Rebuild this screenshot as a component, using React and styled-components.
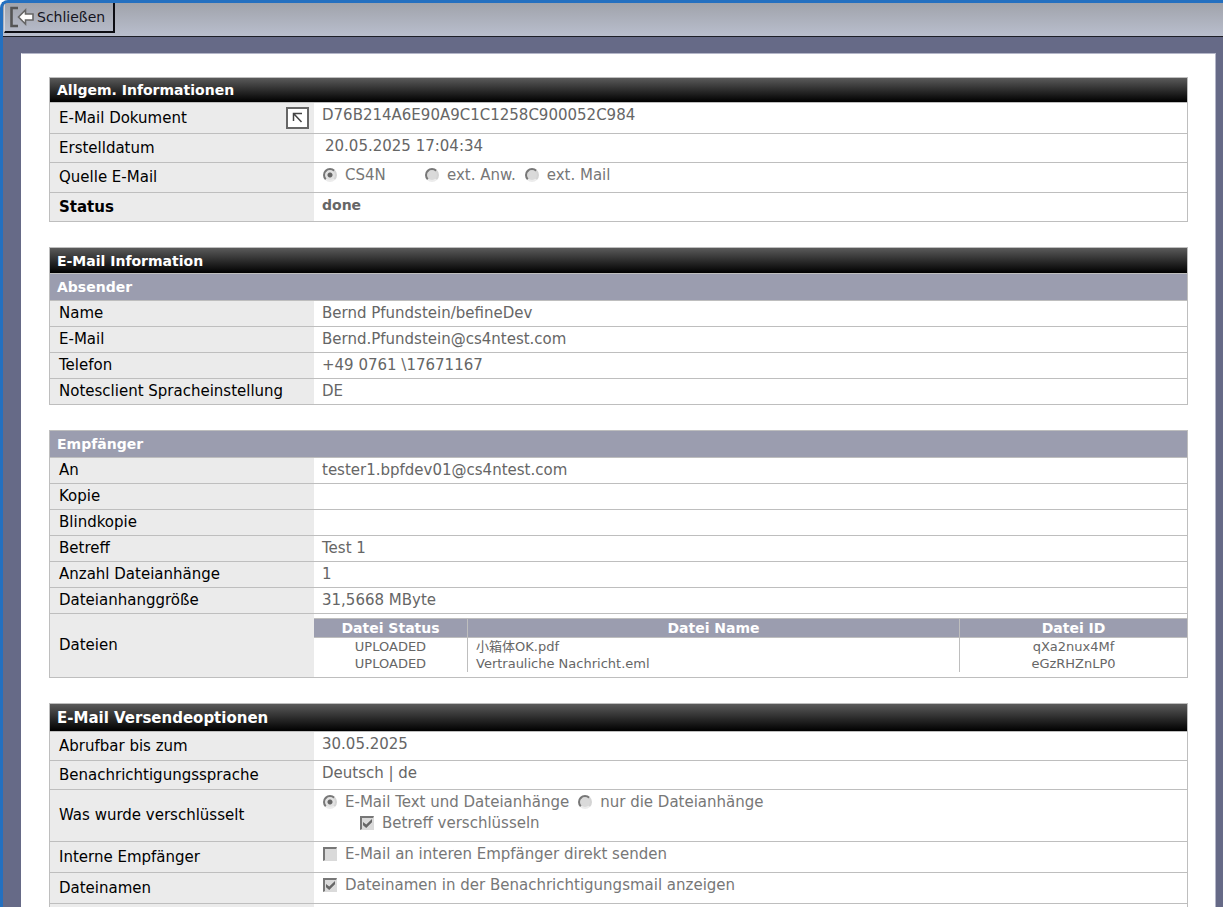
import React from "react";
import styled, { createGlobalStyle } from "styled-components";

const GlobalStyle = createGlobalStyle`
  * {
    box-sizing: border-box;
  }
  body {
    margin: 0;
    background: #fff;
    font-family: "DejaVu Sans", Verdana, "Noto Sans CJK SC", sans-serif;
    font-size: 15px;
    line-height: 20px;
    color: #000;
  }
`;

const Window = styled.div`
  display: flex;
  flex-direction: column;
  height: 100vh;
  border-top: 3px solid #2470c0;
  border-left: 3px solid #2470c0;
  border-top-left-radius: 8px;
  background: #666a87;
  overflow: hidden;
`;

const Toolbar = styled.header`
  display: flex;
  flex: none;
  height: 34px;
  padding: 0 1px 3px;
  border-bottom: 1px solid #1c1e26;
  background: linear-gradient(#a0a3ab, #b9becd);
`;

const ToolButton = styled.button`
  display: flex;
  align-items: center;
  gap: 3px;
  padding: 0 8px 1px 4px;
  border: solid;
  border-width: 0 2px 2px 1px;
  border-color: #0c0c12 #0c0c12 #0c0c12 #d5d8e2;
  background: transparent;
  font: inherit;
  font-size: 14px;
  color: #14141e;
`;

const Scroller = styled.main`
  flex: 1;
  min-height: 0;
  padding: 16px 7px 0 18px;
  overflow-y: auto;
  scrollbar-width: none;
`;

const Sheet = styled.div`
  display: flex;
  flex-direction: column;
  gap: 25px;
  padding: 23px 27px;
  border: 1px solid #b4b6c8;
  border-left-color: #fff;
  background: #fff;
`;

const Section = styled.table`
  width: 100%;
  table-layout: fixed;
  border-collapse: separate;
  border-spacing: 0;
  border: 1px solid #bebebe;
  border-bottom: 0;
`;

const LabelCol = styled.col`
  width: 264px;
`;

const Title = styled.th`
  height: ${(props) => props.$height || 26}px;
  padding: 0 7px;
  border-bottom: 1px solid #bebebe;
  background: linear-gradient(#5a5a5a, #000);
  font-size: ${(props) => (props.$large ? 15 : 14)}px;
  text-align: left;
  color: #fff;
`;

const SubTitle = styled(Title)`
  height: 27px;
  background: #9b9daf;
`;

const Label = styled.th`
  height: ${(props) => props.$height || 26}px;
  padding: 0 5px 1px 9px;
  border-bottom: 1px solid #bebebe;
  background: #ebebeb;
  font-weight: ${(props) => (props.$strong ? "bold" : "normal")};
  text-align: left;
`;

const LabelLine = styled.div`
  display: flex;
  align-items: center;
  justify-content: space-between;
`;

const Value = styled.td`
  padding: ${(props) => (props.$flush ? "4px 0 5px" : "2px 8px 0")};
  border-bottom: 1px solid #bebebe;
  font-size: ${(props) => (props.$strong ? 14 : 15)}px;
  font-weight: ${(props) => (props.$strong ? "bold" : "normal")};
  vertical-align: top;
  color: #666;
`;

const DateTime = styled.time`
  padding-left: 3px;
`;

const LinkButton = styled.button`
  display: grid;
  place-items: center;
  width: 23px;
  height: 22px;
  padding: 0;
  border: 2px solid #666;
  background: #fff;
`;

const Options = styled.div`
  display: flex;
  gap: 8px;
  padding-left: ${(props) => props.$indent || 0}px;
  & + & {
    margin-top: 1px;
  }
`;

const Option = styled.label`
  display: flex;
  align-items: center;
  gap: 8px;
  min-width: ${(props) => props.$width || 0}px;
  padding-left: 1px;
  color: #777;
`;

const Radio = styled.input`
  appearance: none;
  width: 14px;
  height: 14px;
  margin: 0;
  border: 2px solid;
  border-color: #777 #d4d4d4 #ececec #777;
  border-radius: 50%;
  background: #dadada;
  &:checked {
    background: radial-gradient(#666 2px, #e2e2e2 3px);
  }
`;

const Check = styled.input`
  appearance: none;
  display: grid;
  place-items: center;
  width: 14px;
  height: 14px;
  margin: 0;
  border: solid;
  border-width: 2px 1px 1px 2px;
  border-color: #777 #dadada #dadada #777;
  background: #dadada;
  &:checked::before {
    content: "";
    width: 9px;
    height: 9px;
    background: #666;
    clip-path: polygon(0 32%, 36% 62%, 100% 0, 100% 36%, 36% 100%, 0 70%);
  }
`;

const Files = styled.table`
  width: 100%;
  table-layout: fixed;
  border-collapse: separate;
  border-spacing: 0;
  font-size: 13px;
  line-height: 17px;
`;

const FileCol = styled.col`
  width: ${(props) => props.$width};
`;

const FileHead = styled.th`
  height: 20px;
  padding: 0;
  border: solid #bebebe;
  border-width: 1px 1px 1px 0;
  background: #9b9daf;
  font-size: 14px;
  color: #fff;
  &:last-child {
    border-right: 0;
  }
`;

const FileCell = styled.td`
  padding: 0 8px;
  border-right: 1px solid #bebebe;
  text-align: ${(props) => props.$align || "center"};
  &:last-child {
    border-right: 0;
  }
`;

const CloseIcon = () => (
  <svg width="25" height="22" viewBox="0 0 25 22" aria-hidden="true">
    <path d="M9 2H2.500v18H9" fill="none" stroke="#555" strokeWidth="2.600" />
    <path
      d="M9.500 11 16.500 4v4h7.500v6h-7.500v4z"
      fill="#fff"
      stroke="#666"
      strokeWidth="1.600"
    />
  </svg>
);

const OpenIcon = () => (
  <svg width="13" height="13" viewBox="0 0 13 13" aria-hidden="true">
    <path
      d="M2.500 10V2.500H11M3 3l7.500 8"
      fill="none"
      stroke="#444"
      strokeWidth="1.500"
    />
  </svg>
);

const Row = ({ label, height, strong, action, flush, children }) => (
  <tr>
    <Label scope="row" $height={height} $strong={strong}>
      {action ? (
        <LabelLine>
          {label}
          {action}
        </LabelLine>
      ) : (
        label
      )}
    </Label>
    <Value $strong={strong} $flush={flush}>
      {children}
    </Value>
  </tr>
);

const Columns = () => (
  <colgroup>
    <LabelCol />
    <col />
  </colgroup>
);

const files = [
  { status: "UPLOADED", name: "小箱体OK.pdf", id: "qXa2nux4Mf" },
  { status: "UPLOADED", name: "Vertrauliche Nachricht.eml", id: "eGzRHZnLP0" },
];

const App = () => {
  return (
    <>
      <GlobalStyle />
      <Window>
        <Toolbar>
          <ToolButton type="button">
            <CloseIcon />
            Schließen
          </ToolButton>
        </Toolbar>
        <Scroller>
          <Sheet>
            <Section>
              <Columns />
              <thead>
                <tr>
                  <Title colSpan={2} $height={25}>
                    Allgem. Informationen
                  </Title>
                </tr>
              </thead>
              <tbody>
                <Row
                  label="E-Mail Dokument"
                  height={31}
                  action={
                    <LinkButton type="button" aria-label="Dokument öffnen">
                      <OpenIcon />
                    </LinkButton>
                  }
                >
                  D76B214A6E90A9C1C1258C900052C984
                </Row>
                <Row label="Erstelldatum" height={29}>
                  <DateTime>20.05.2025 17:04:34</DateTime>
                </Row>
                <Row label="Quelle E-Mail" height={30}>
                  <Options>
                    <Option $width={94}>
                      <Radio type="radio" name="quelle" defaultChecked disabled />
                      CS4N
                    </Option>
                    <Option>
                      <Radio type="radio" name="quelle" disabled />
                      ext. Anw.
                    </Option>
                    <Option>
                      <Radio type="radio" name="quelle" disabled />
                      ext. Mail
                    </Option>
                  </Options>
                </Row>
                <Row label="Status" height={29} strong>
                  done
                </Row>
              </tbody>
            </Section>

            <Section>
              <Columns />
              <thead>
                <tr>
                  <Title colSpan={2}>E-Mail Information</Title>
                </tr>
                <tr>
                  <SubTitle colSpan={2}>Absender</SubTitle>
                </tr>
              </thead>
              <tbody>
                <Row label="Name">Bernd Pfundstein/befineDev</Row>
                <Row label="E-Mail">Bernd.Pfundstein@cs4ntest.com</Row>
                <Row label="Telefon">+49 0761 \17671167</Row>
                <Row label="Notesclient Spracheinstellung">DE</Row>
              </tbody>
            </Section>

            <Section>
              <Columns />
              <thead>
                <tr>
                  <SubTitle colSpan={2}>Empfänger</SubTitle>
                </tr>
              </thead>
              <tbody>
                <Row label="An">tester1.bpfdev01@cs4ntest.com</Row>
                <Row label="Kopie" />
                <Row label="Blindkopie" />
                <Row label="Betreff">Test 1</Row>
                <Row label="Anzahl Dateianhänge">1</Row>
                <Row label="Dateianhanggröße">31,5668 MByte</Row>
                <Row label="Dateien" height={64} flush>
                  <Files>
                    <colgroup>
                      <FileCol $width="154px" />
                      <FileCol />
                      <FileCol $width="26%" />
                    </colgroup>
                    <thead>
                      <tr>
                        <FileHead>Datei Status</FileHead>
                        <FileHead>Datei Name</FileHead>
                        <FileHead>Datei ID</FileHead>
                      </tr>
                    </thead>
                    <tbody>
                      {files.map((file) => (
                        <tr key={file.id}>
                          <FileCell>{file.status}</FileCell>
                          <FileCell $align="left">{file.name}</FileCell>
                          <FileCell>{file.id}</FileCell>
                        </tr>
                      ))}
                    </tbody>
                  </Files>
                </Row>
              </tbody>
            </Section>

            <Section>
              <Columns />
              <thead>
                <tr>
                  <Title colSpan={2} $height={28} $large>
                    E-Mail Versendeoptionen
                  </Title>
                </tr>
              </thead>
              <tbody>
                <Row label="Abrufbar bis zum" height={29}>
                  30.05.2025
                </Row>
                <Row label="Benachrichtigungssprache" height={29}>
                  Deutsch | de
                </Row>
                <Row label="Was wurde verschlüsselt" height={52}>
                  <Options>
                    <Option>
                      <Radio type="radio" name="umfang" defaultChecked disabled />
                      E-Mail Text und Dateianhänge
                    </Option>
                    <Option>
                      <Radio type="radio" name="umfang" disabled />
                      nur die Dateianhänge
                    </Option>
                  </Options>
                  <Options $indent={37}>
                    <Option>
                      <Check type="checkbox" defaultChecked disabled />
                      Betreff verschlüsseln
                    </Option>
                  </Options>
                </Row>
                <Row label="Interne Empfänger" height={31}>
                  <Option>
                    <Check type="checkbox" disabled />
                    E-Mail an interen Empfänger direkt senden
                  </Option>
                </Row>
                <Row label="Dateinamen" height={31}>
                  <Option>
                    <Check type="checkbox" defaultChecked disabled />
                    Dateinamen in der Benachrichtigungsmail anzeigen
                  </Option>
                </Row>
                <Row label="" height={31} />
              </tbody>
            </Section>
          </Sheet>
        </Scroller>
      </Window>
    </>
  );
};

export default App;
